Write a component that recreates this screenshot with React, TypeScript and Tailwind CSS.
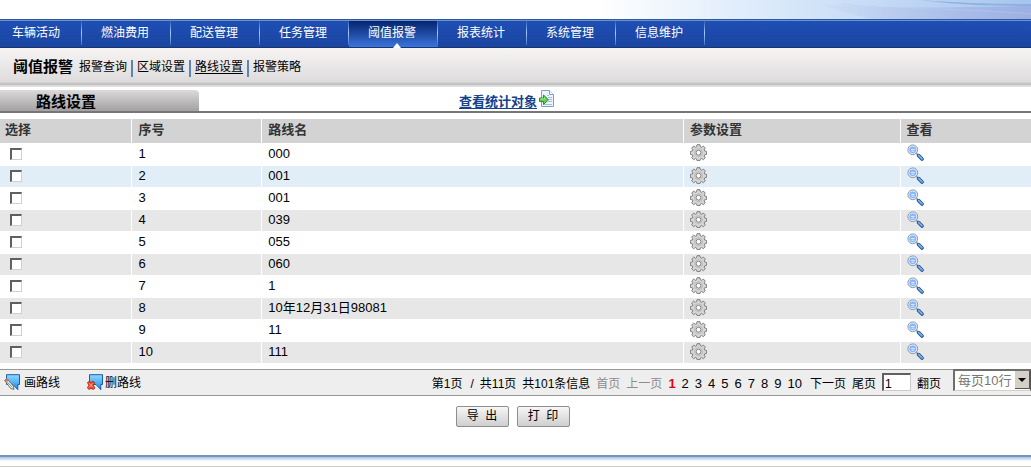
import { useState } from 'react';
import clsx from 'clsx';

const NAV_ITEMS = ['车辆活动', '燃油费用', '配送管理', '任务管理', '阈值报警', '报表统计', '系统管理', '信息维护'];
const SUB_ITEMS = ['报警查询', '区域设置', '路线设置', '报警策略'];

const ROUTES = [
  { id: 1, name: '000' },
  { id: 2, name: '001' },
  { id: 3, name: '001' },
  { id: 4, name: '039' },
  { id: 5, name: '055' },
  { id: 6, name: '060' },
  { id: 7, name: '1' },
  { id: 8, name: '10年12月31日98081' },
  { id: 9, name: '11' },
  { id: 10, name: '111' },
];

const PAGES = [1, 2, 3, 4, 5, 6, 7, 8, 9, 10];

function GearIcon() {
  return (
    <svg className="block size-[17px]" viewBox="0 0 17 17" aria-hidden="true">
      <path
        d="M7 .7h3l.4 2.1 1.2.5 1.8-1.2 1.9 1.9-1.1 1.8.5 1.2 1.9.4v3l-2 .4-.5 1.2 1.2 1.8-1.9 1.9-1.8-1.2-1.2.5-.4 1.6H7l-.4-1.6-1.2-.5-1.8 1.2-1.9-1.9 1.2-1.8-.5-1.2-2-.4v-3l2-.4.5-1.2-1.2-1.8 1.9-1.9 1.8 1.2 1.2-.5z"
        fill="#d6d6d6"
        stroke="#7f7f7f"
        strokeLinejoin="round"
      />
      <circle cx="8.5" cy="8.7" r="4" fill="none" stroke="#b9b9b9" />
      <circle cx="8.5" cy="8.7" r="2.4" fill="#fff" stroke="#858585" />
    </svg>
  );
}

function MagnifierIcon() {
  return (
    <svg className="block size-[17px]" viewBox="0 0 17 17" aria-hidden="true">
      <path d="M9.3 9.3l2 2" stroke="#8b9097" strokeWidth="1.6" />
      <path d="M11.6 11.6l3.4 3.4" stroke="#25508f" strokeWidth="3.6" strokeLinecap="round" />
      <path d="M11.6 11.4l3.4 3.4" stroke="#78b3ee" strokeWidth="1.8" strokeLinecap="round" />
      <circle cx="5.8" cy="5.8" r="4.9" fill="#deebff" stroke="#8d98a8" />
      <circle cx="5.8" cy="5.8" r="3.4" fill="#86b4fa" />
      <path d="M4 5.4h3.6M4.4 7.2h3" stroke="#e4f0ff" />
    </svg>
  );
}

function DocumentIcon() {
  return (
    <svg className="block h-[17px] w-[15px]" viewBox="0 0 15 17" aria-hidden="true">
      <path d="M2.5.5h8l4 4v12h-12z" fill="#edf4fd" stroke="#7f9fcb" />
      <path d="M10.5.5v4h4" fill="#fff" stroke="#7f9fcb" />
      <path d="M8 5.5h2M9 7.5h4M10 9.5h3M9 11.5h4M5 14.5h8" stroke="#a9bfe0" />
      <path d="M.5 8h4V5l5 4.8-5 4.7v-3h-4z" fill="#5fd04f" stroke="#2b8c2c" strokeLinejoin="round" />
      <path d="M1.5 9h4V7.4" fill="none" stroke="#a2e692" />
    </svg>
  );
}

function RouteFlag() {
  return (
    <>
      <defs>
        <linearGradient id="flag" x1="0" y1="0" x2="0" y2="1">
          <stop offset="0" stopColor="#8fd8ff" />
          <stop offset="1" stopColor="#1b8bea" />
        </linearGradient>
      </defs>
      <path d="M2.5.7h13v9.8h-1.7v5.2L9 10.5H2.5z" fill="url(#flag)" stroke="#1660a8" strokeLinejoin="round" />
    </>
  );
}

function DrawRouteIcon() {
  return (
    <svg className="block size-4" viewBox="0 0 16 16" aria-hidden="true">
      <RouteFlag />
      <path d="M.6 6.4l2.2-1.8 6.6 7.4.6 3.4-3.4-1z" fill="#f6edc6" stroke="#4d5a66" strokeWidth=".8" />
      <path d="M.6 6.4l2.2-1.8 1.6 1.9-2.1 1.7z" fill="#f06a50" />
      <path d="M3.2 7.8l5 5.6" stroke="#6fa0c8" />
      <path d="M8.2 14.9l1.4-1.2.4 1.7z" fill="#b98a2a" />
    </svg>
  );
}

function DeleteRouteIcon() {
  return (
    <svg className="block size-4" viewBox="0 0 16 16" aria-hidden="true">
      <RouteFlag />
      <path d="M.5 8.5l1.8-1.2L4 8.6l1.9-1.3 1.8 1.3-1.3 2.7 1.5 2.8-1.8 1.4L4 14.3l-1.8 1.2L.4 14l1.4-2.7z" fill="#ee4a27" stroke="#a91f0e" strokeWidth=".8" />
      <path d="M2 9.2l4 4.2M6 9.2l-4 4.2" stroke="#ffa58c" />
    </svg>
  );
}

function Banner() {
  return (
    <div className="flex h-[19px] justify-end bg-linear-to-r from-white from-58% via-[#cfe2f8] via-80% to-[#a6c4ec]">
      <svg className="h-full w-[220px]" viewBox="0 0 220 19" preserveAspectRatio="none" aria-hidden="true">
        <defs>
          <linearGradient id="haze" x1="0" x2="1">
            <stop offset="0" stopColor="#a9b4e6" stopOpacity="0" />
            <stop offset="1" stopColor="#9caae0" />
          </linearGradient>
        </defs>
        <path d="M0 3C70 10 140 7 220 6v13H60z" fill="url(#haze)" opacity=".8" />
        <path d="M110 0c40 3 70 4 110 4v2c-50 0-80-2-110-6z" fill="#7ea6e0" opacity=".7" />
        <path d="M30 4c60 6 120 4 190 10" fill="none" stroke="#b9cdf0" opacity=".5" />
      </svg>
    </div>
  );
}

function MainNav() {
  return (
    <nav className="flex h-[29px] border-t border-b border-t-[#2c5a9c] border-b-[#17366f] bg-linear-to-b from-[#1f4fb6] to-[#1a45a0] text-white">
      {NAV_ITEMS.map((item, i) => {
        const active = item === '阈值报警';
        return (
          <a
            key={item}
            href="#"
            className={clsx(
              'relative flex items-center border-t border-t-[#6c93cf]',
              i === 0 ? 'w-[82px] pl-3' : 'w-[89px] pl-[19px]',
              active && 'bg-linear-to-b from-[#06256f] to-[#3c74dc]',
            )}
          >
            <span className="pb-0.5">{item}</span>
            <span className="absolute top-0 right-0 h-6 w-px bg-linear-to-b from-[#2f60c0] via-[#a9ccf8] to-[#3f72cc]" />
            {active && (
              <span className="absolute -bottom-px left-11 size-0 border-x-4 border-b-5 border-x-transparent border-b-white" />
            )}
          </a>
        );
      })}
      <span className="flex-1 border-t border-t-[#6c93cf]" />
    </nav>
  );
}

function SubNav() {
  return (
    <div className="flex h-[39px] items-center border-b-2 border-b-[#dedede] bg-linear-to-b from-[#f8f4f4] via-[#dedcdd] via-90% to-[#b9b9b9] pl-[13px]">
      <h1 className="mr-1.5 text-[15px] leading-5 font-bold">阈值报警</h1>
      <ul className="flex items-center">
        {SUB_ITEMS.map((item, i) => (
          <li key={item} className="flex items-center">
            {i > 0 && <span className="mx-1 mt-1 h-[17px] w-0.5 bg-[#5c83bd]" />}
            <a href="#" className={clsx('leading-4', item === '路线设置' && 'underline underline-offset-2')}>
              {item}
            </a>
          </li>
        ))}
      </ul>
    </div>
  );
}

function Pager() {
  const [page, setPage] = useState('1');

  return (
    <div className="flex items-center">
      <div className="flex items-center pt-1">
        <span className="mr-2">第1页</span>
        <span className="mr-1.5">/</span>
        <span className="mr-1.5">共11页</span>
        <span className="mr-1.5">共101条信息</span>
        <span className="mr-1.5 text-[#8c8c8c]">首页</span>
        <span className="mr-1.5 text-[#8c8c8c]">上一页</span>
        <div className="mr-2 flex gap-1.5 text-[13px] leading-4">
          {PAGES.map(p => (
            <a key={p} href="#" className={clsx(p === 1 && 'font-bold text-[#e60012]')}>{p}</a>
          ))}
        </div>
        <a href="#" className="mr-1.5">下一页</a>
        <a href="#" className="mr-1.5">尾页</a>
      </div>
      <input
        aria-label="页码"
        className="h-[18px] w-[29px] border-t-2 border-r border-b border-l-2 border-t-[#606060] border-r-[#cfccc8] border-b-[#cfccc8] border-l-[#606060] bg-white pt-0.5 pl-px outline-none"
        value={page}
        onChange={e => setPage(e.target.value)}
      />
      <button type="button" className="mr-3 ml-1.5 pt-1">翻页</button>
      <div className="relative mb-1">
        <select
          aria-label="每页行数"
          className="block h-[22px] w-[78px] appearance-none border-t-2 border-r border-b border-l-2 border-t-[#6e6e6e] border-r-[#555] border-b-[#d4d0c8] border-l-[#6e6e6e] bg-white pl-[3px] text-[13px] text-[#777] outline-none"
        >
          <option>每页10行</option>
          <option>每页20行</option>
        </select>
        <span className="pointer-events-none absolute top-0.5 right-px flex h-[18px] w-[15px] items-center justify-center border-r border-b border-[#555] bg-[#d4d0c8]">
          <span className="size-0 border-x-4 border-t-4 border-x-transparent border-t-black" />
        </span>
      </div>
    </div>
  );
}

export default function App() {
  return (
    <div className="bg-white font-['Liberation_Sans','Noto_Sans_CJK_SC',sans-serif] text-xs text-black">
      <Banner />
      <MainNav />
      <SubNav />

      <div className="mt-[3px] grid h-[23px] grid-cols-[199px_1fr_217px] border-b-2 border-b-[#777]">
        <h2 className="rounded-tr bg-linear-to-b from-[#dcdadb] to-[#a3a1a2] pt-1 pl-9 text-[15px] leading-4 font-bold">路线设置</h2>
        <a href="#" className="flex items-start justify-center gap-0.5 text-[13px] font-bold text-[#15428b]">
          <span className="pt-1 leading-4 underline underline-offset-2">查看统计对象</span>
          <DocumentIcon />
        </a>
      </div>

      <table className="mt-1.5 w-full table-fixed border-collapse text-left text-[13px] leading-4">
        <thead>
          <tr className="h-6 bg-[#d3d3d3] text-[#333]">
            <th className="w-[12.8%] border-r border-r-white pb-0.5 pl-[5px]">选择</th>
            <th className="w-[12.6%] border-r border-r-white pb-0.5 pl-1.5">序号</th>
            <th className="w-[40.9%] border-r border-r-white pb-0.5 pl-1.5">路线名</th>
            <th className="w-[21%] border-r border-r-white pb-0.5 pl-1.5">参数设置</th>
            <th className="pb-0.5 pl-1.5">查看</th>
          </tr>
        </thead>
        <tbody>
          {ROUTES.map(route => (
            <tr
              key={route.id}
              className={clsx(
                'h-[22px] border-b border-b-white',
                route.id === 2 ? 'bg-[#e1eef7]' : route.id % 2 === 0 ? 'bg-[#e7e7e7]' : 'bg-white',
              )}
            >
              <td className="border-r border-r-white pl-2.5">
                <input
                  type="checkbox"
                  aria-label={`选择路线 ${route.name}`}
                  className="block size-3 appearance-none border-t-2 border-r border-b border-l-2 border-t-[#606060] border-r-[#d4d0c8] border-b-[#d4d0c8] border-l-[#606060] bg-white checked:bg-[#555]"
                />
              </td>
              <td className="border-r border-r-white pl-1.5">{route.id}</td>
              <td className="border-r border-r-white pl-1.5">{route.name}</td>
              <td className="border-r border-r-white pb-0.5 pl-1.5">
                <button type="button" aria-label="参数设置" className="block"><GearIcon /></button>
              </td>
              <td className="pb-0.5 pl-1.5">
                <button type="button" aria-label="查看" className="block"><MagnifierIcon /></button>
              </td>
            </tr>
          ))}
        </tbody>
      </table>

      <div className="mt-[5px] flex h-[27px] items-center justify-between border-y border-y-[#999] bg-[#eee]">
        <div className="flex items-center gap-[27px] pl-1">
          <button type="button" className="flex items-center gap-1"><DrawRouteIcon /><span className="pt-0.5">画路线</span></button>
          <button type="button" className="flex items-center gap-0.5"><DeleteRouteIcon /><span className="pt-0.5">删路线</span></button>
        </div>
        <Pager />
      </div>

      <div className="mt-2.5 flex justify-center gap-2 pr-1.5">
        <button type="button" className="h-[21px] w-[53px] rounded-xs border border-[#8e8e8e] bg-linear-to-b from-[#f6f6f6] to-[#cfcfcf] leading-4">导&nbsp; 出</button>
        <button type="button" className="h-[21px] w-[53px] rounded-xs border border-[#8e8e8e] bg-linear-to-b from-[#f6f6f6] to-[#cfcfcf] leading-4">打&nbsp; 印</button>
      </div>

      <footer className="mt-7 h-3 border-t-2 border-b border-t-[#7394c0] border-b-[#d0ccc8] bg-linear-to-b from-[#a9c0e2] via-[#e8eefb] via-35% to-white to-50%" />
    </div>
  );
}
